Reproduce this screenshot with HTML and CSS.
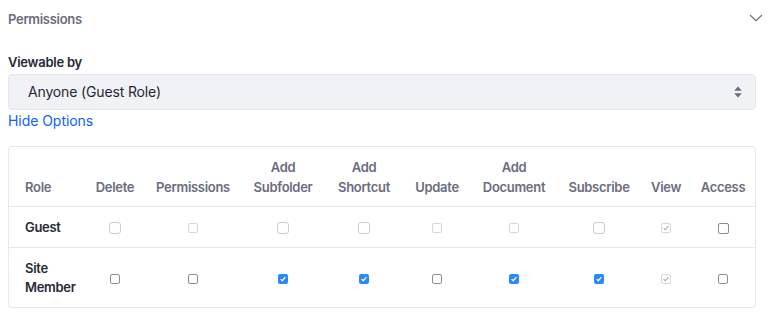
FILE: index.html
```html
<!DOCTYPE html>
<html>
<head>
<meta charset="utf-8">
<link rel="stylesheet" href="styles.css">
</head>
<body>
<div class="panel">
  <div class="panel-header">
    <span class="panel-title">Permissions</span>
    <svg class="chevron" width="14" height="8" viewBox="0 0 14 8"><path d="M1 1 L7 6.6 L13 1" fill="none" stroke="#6b6c7e" stroke-width="1.2"/></svg>
  </div>
  <div class="field">
    <label class="field-label">Viewable by</label>
    <div class="select">
      <span class="select-value">Anyone (Guest Role)</span>
      <svg class="select-arrows" width="8" height="12" viewBox="0 0 8 12"><path d="M4 0.5 L7.8 4.8 L0.2 4.8 Z M4 11.5 L7.8 7.2 L0.2 7.2 Z" fill="#6b6c7e"/></svg>
    </div>
    <a class="toggle-link">Hide Options</a>
  </div>
  <div class="table-wrap">
    <table class="perm-table">
      <colgroup>
        <col style="width:76px"><col style="width:60px"><col style="width:96px"><col style="width:84px"><col style="width:78px"><col style="width:68px"><col style="width:86px"><col style="width:84px"><col style="width:50px"><col style="width:64px">
      </colgroup>
      <thead>
        <tr>
          <th class="role-col">Role</th>
          <th>Delete</th>
          <th>Permissions</th>
          <th>Add<br>Subfolder</th>
          <th>Add<br>Shortcut</th>
          <th>Update</th>
          <th>Add<br>Document</th>
          <th>Subscribe</th>
          <th>View</th>
          <th>Access</th>
        </tr>
      </thead>
      <tbody>
        <tr>
          <td class="role-col">Guest</td>
          <td><span class="cb cb-light"></span></td>
          <td><span class="cb cb-disabled"></span></td>
          <td><span class="cb cb-light"></span></td>
          <td><span class="cb cb-light"></span></td>
          <td><span class="cb cb-disabled"></span></td>
          <td><span class="cb cb-disabled"></span></td>
          <td><span class="cb cb-light"></span></td>
          <td><span class="cb cb-disabled"><svg viewBox="0 0 10 10" width="8" height="8"><path d="M2 5.2 L4 7.2 L8 2.6" fill="none" stroke="#a7a9bc" stroke-width="1.4"/></svg></span></td>
          <td><span class="cb cb-dark cb-11"></span></td>
        </tr>
        <tr>
          <td class="role-col">Site<br>Member</td>
          <td><span class="cb cb-dark"></span></td>
          <td><span class="cb cb-dark"></span></td>
          <td><span class="cb cb-checked"><svg viewBox="0 0 10 10" width="8" height="8"><path d="M2 5.2 L4 7.2 L8 2.6" fill="none" stroke="#fff" stroke-width="1.5"/></svg></span></td>
          <td><span class="cb cb-checked"><svg viewBox="0 0 10 10" width="8" height="8"><path d="M2 5.2 L4 7.2 L8 2.6" fill="none" stroke="#fff" stroke-width="1.5"/></svg></span></td>
          <td><span class="cb cb-dark"></span></td>
          <td><span class="cb cb-checked"><svg viewBox="0 0 10 10" width="8" height="8"><path d="M2 5.2 L4 7.2 L8 2.6" fill="none" stroke="#fff" stroke-width="1.5"/></svg></span></td>
          <td><span class="cb cb-checked"><svg viewBox="0 0 10 10" width="8" height="8"><path d="M2 5.2 L4 7.2 L8 2.6" fill="none" stroke="#fff" stroke-width="1.5"/></svg></span></td>
          <td><span class="cb cb-disabled"><svg viewBox="0 0 10 10" width="8" height="8"><path d="M2 5.2 L4 7.2 L8 2.6" fill="none" stroke="#a7a9bc" stroke-width="1.4"/></svg></span></td>
          <td><span class="cb cb-dark"></span></td>
        </tr>
      </tbody>
    </table>
  </div>
</div>
</body>
</html>
```
FILE: styles.css
```css
html, body {
  margin: 0;
  padding: 0;
  background: #ffffff;
}
body {
  padding: 8px;
  font-family: Inter, "Liberation Sans", Arial, sans-serif;
  color: #272833;
  font-size: 14px;
}
.panel {
  width: 748px;
}
.panel-header {
  display: flex;
  align-items: center;
  justify-content: space-between;
  height: 22px;
  width: 755px;
}
.panel-title {
  font-size: 13px;
  font-weight: 600;
  color: #6b6c7e;
  line-height: 20px;
  letter-spacing: -0.3px;
}
.chevron {
  display: block;
  margin-top: -2px;
}
.field {
  display: flex;
  flex-direction: column;
  align-items: flex-start;
  margin-top: 22px;
}
.field-label {
  font-size: 13px;
  font-weight: 600;
  line-height: 20px;
  color: #272833;
  margin-bottom: 2px;
  letter-spacing: -0.25px;
}
.select {
  box-sizing: border-box;
  width: 748px;
  height: 36px;
  background: #f1f2f5;
  border: 1px solid #e7e7ed;
  border-radius: 4px;
  display: flex;
  align-items: center;
  justify-content: space-between;
  padding: 0 13px 0 19px;
}
.select-value {
  font-size: 14px;
  line-height: 20px;
  color: #272833;
  letter-spacing: -0.15px;
}
.select-arrows {
  display: block;
}
.toggle-link {
  margin-top: 1px;
  font-size: 14px;
  line-height: 20px;
  color: #0b5fff;
  cursor: pointer;
  letter-spacing: -0.05px;
}
.table-wrap {
  margin-top: 15px;
}
.perm-table {
  width: 748px;
  table-layout: fixed;
  border-collapse: separate;
  border-spacing: 0;
  border: 1px solid #e7e7ed;
  border-radius: 4px;
  font-size: 13px;
  line-height: 19.5px;
  letter-spacing: -0.3px;
}
.perm-table th {
  font-weight: 600;
  color: #6b6c7e;
  text-align: center;
  vertical-align: bottom;
  padding: 11px 0 9px 0;
}
.perm-table td {
  font-weight: 600;
  color: #272833;
  text-align: center;
  vertical-align: middle;
  padding: 11px 0 9px 0;
  border-top: 1px solid #e7e7ed;
}
.perm-table .role-col {
  text-align: left;
  padding-left: 16px;
}
.cb {
  display: inline-flex;
  align-items: center;
  justify-content: center;
  box-sizing: border-box;
  vertical-align: middle;
  background: #fff;
}
.cb svg {
  display: block;
}
.cb-light {
  width: 12px;
  height: 12px;
  border: 1px solid #cdcdd3;
  border-radius: 3px;
}
.cb-disabled {
  width: 10px;
  height: 10px;
  border: 1px solid #d6d6dc;
  border-radius: 2px;
}
.cb-dark {
  width: 10px;
  height: 10px;
  border: 1px solid #8d8d93;
  border-radius: 2px;
}
.cb-11 {
  width: 11px;
  height: 11px;
}
.cb-checked {
  width: 10px;
  height: 10px;
  background: #2c89f5;
  border-radius: 2px;
}
```
